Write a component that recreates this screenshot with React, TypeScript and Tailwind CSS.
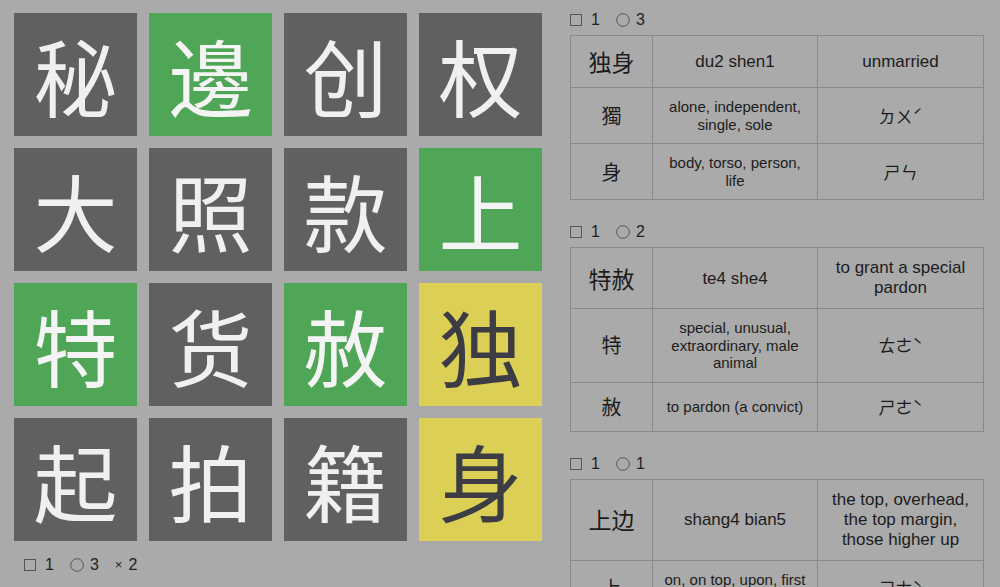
import React from 'react';

type Tile = { ch: string; tone: 'dark' | 'green' | 'yellow' };

const tiles: Tile[] = [
  { ch: '秘', tone: 'dark' },
  { ch: '邊', tone: 'green' },
  { ch: '创', tone: 'dark' },
  { ch: '权', tone: 'dark' },
  { ch: '大', tone: 'dark' },
  { ch: '照', tone: 'dark' },
  { ch: '款', tone: 'dark' },
  { ch: '上', tone: 'green' },
  { ch: '特', tone: 'green' },
  { ch: '货', tone: 'dark' },
  { ch: '赦', tone: 'green' },
  { ch: '独', tone: 'yellow' },
  { ch: '起', tone: 'dark' },
  { ch: '拍', tone: 'dark' },
  { ch: '籍', tone: 'dark' },
  { ch: '身', tone: 'yellow' },
];

type Row = { ch: string; a: string; b: string; small?: boolean };
type Word = { sq: number; ci: number; rows: Row[] };

const words: Word[] = [
  {
    sq: 1,
    ci: 3,
    rows: [
      { ch: '独身', a: 'du2 shen1', b: 'unmarried' },
      { ch: '獨', a: 'alone, independent, single, sole', b: 'ㄉㄨˊ', small: true },
      { ch: '身', a: 'body, torso, person, life', b: 'ㄕㄣ', small: true },
    ],
  },
  {
    sq: 1,
    ci: 2,
    rows: [
      { ch: '特赦', a: 'te4 she4', b: 'to grant a special pardon' },
      { ch: '特', a: 'special, unusual, extraordinary, male animal', b: 'ㄊㄜˋ', small: true },
      { ch: '赦', a: 'to pardon (a convict)', b: 'ㄕㄜˋ', small: true },
    ],
  },
  {
    sq: 1,
    ci: 1,
    rows: [
      { ch: '上边', a: 'shang4 bian5', b: 'the top, overhead, the top margin, those higher up' },
      { ch: '上', a: 'on, on top, upon, first (of multiple parts)', b: 'ㄕㄤˋ', small: true },
      { ch: '边', a: 'side, edge, margin, border, boundary', b: 'ㄅㄧㄢ', small: true },
    ],
  },
];

const toneClass: Record<Tile['tone'], string> = {
  dark: 'bg-[#606060] text-[#f0f0f0]',
  green: 'bg-[#4fa656] text-[#f4f4f4]',
  yellow: 'bg-[#dccf55] text-[#3c3c44]',
};

const cjk = { fontFamily: '"Noto Sans CJK SC", "Noto Sans", sans-serif' };
const latin = { fontFamily: '"Liberation Sans", Arial, "Noto Sans CJK TC", sans-serif' };

function Square() {
  return (
    <svg width="12" height="12" viewBox="0 0 12 12" className="inline-block">
      <rect x="0.5" y="0.5" width="11" height="11" fill="none" stroke="#555" strokeWidth="1" />
    </svg>
  );
}

function Circle() {
  return (
    <svg width="14" height="14" viewBox="0 0 14 14" className="inline-block">
      <circle cx="7" cy="7" r="6.3" fill="none" stroke="#555" strokeWidth="1" />
    </svg>
  );
}

function Counts({ sq, ci, x }: { sq: number; ci: number; x?: number }) {
  return (
    <div className="flex items-center text-[16px] leading-5 text-[#222]" style={latin}>
      <Square />
      <span className="ml-[9px]">{sq}</span>
      <span className="ml-[16px] flex items-center">
        <Circle />
      </span>
      <span className="ml-[6px]">{ci}</span>
      {x !== undefined && (
        <>
          <span className="ml-[16px] text-[13px]">×</span>
          <span className="ml-[6px]">{x}</span>
        </>
      )}
    </div>
  );
}

function WordTable({ word }: { word: Word }) {
  return (
    <table className="w-[413px] border-collapse border border-[#8a8a8a] text-[#1c1c1c] table-fixed">
      <colgroup>
        <col className="w-[82px]" />
        <col className="w-[165px]" />
        <col className="w-[166px]" />
      </colgroup>
      <tbody>
        {word.rows.map((r, i) => (
          <tr key={i}>
            <td
              className={`border border-[#8a8a8a] text-center py-[10px] ${i === 0 ? 'text-[23px] leading-[31px]' : 'text-[20px] leading-7'}`}
              style={cjk}
            >
              {r.ch}
            </td>
            <td
              className={`border border-[#8a8a8a] text-center px-[5px] py-[10px] ${r.small ? 'text-[15px] leading-[17.5px]' : 'text-[17px] leading-[21px]'}`}
              style={latin}
            >
              {r.a}
            </td>
            <td
              className={`border border-[#8a8a8a] text-center px-[6px] py-[10px] ${r.small ? 'text-[17px] leading-5' : 'text-[17px] leading-[20px]'}`}
              style={r.small ? cjk : latin}
            >
              {r.b}
            </td>
          </tr>
        ))}
      </tbody>
    </table>
  );
}

export default function App() {
  return (
    <div className="min-h-screen bg-[#aaaaaa] flex items-start">
      <div className="pl-[14px] pt-[13px]">
        <div className="grid grid-cols-[repeat(4,123px)] gap-[12px]">
          {tiles.map((t, i) => (
            <div
              key={i}
              className={`w-[123px] h-[123px] flex items-center justify-center text-[84px] leading-none ${toneClass[t.tone]}`}
              style={cjk}
            >
              {t.ch}
            </div>
          ))}
        </div>
        <div className="mt-[14px] pl-[10px]">
          <Counts sq={1} ci={3} x={2} />
        </div>
      </div>
      <div className="ml-[28px] pt-[10px] flex flex-col gap-[22px]">
        {words.map((w, i) => (
          <div key={i} className="flex flex-col gap-[5px]">
            <Counts sq={w.sq} ci={w.ci} />
            <WordTable word={w} />
          </div>
        ))}
      </div>
    </div>
  );
}
